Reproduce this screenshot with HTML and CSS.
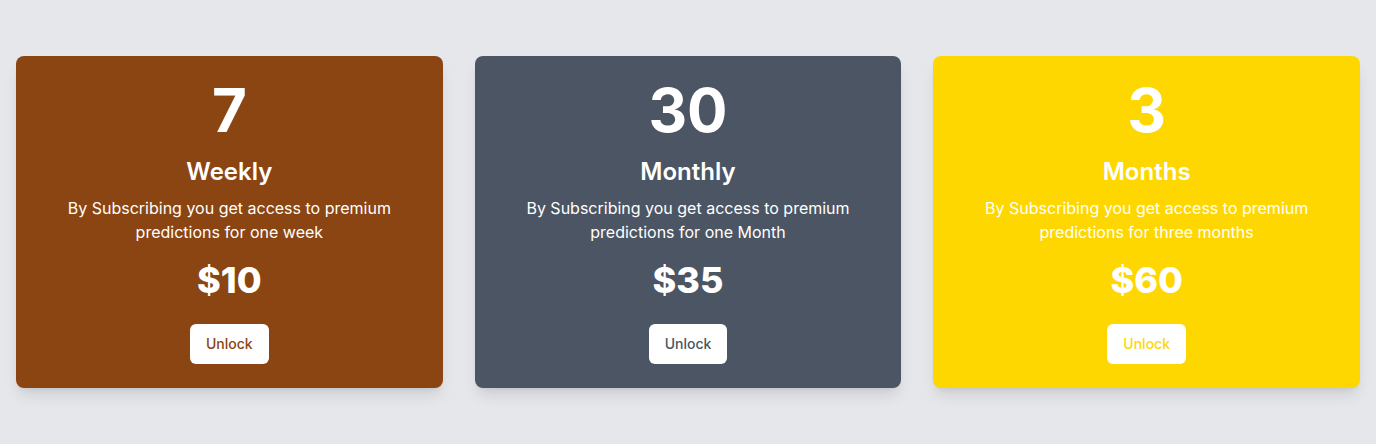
FILE: index.html
```html
<!DOCTYPE html>
<html lang="en">
<head>
    <meta charset="UTF-8">
    <meta name="viewport" content="width=device-width, initial-scale=1.0">
    <title>Plans</title>
    <link rel="stylesheet" href="styles.css">
</head>
<body>

<div class="plans">
    <div class="plan weekly">
        <div class="plan-days">7</div>
        <h2 class="plan-name">Weekly</h2>
        <p class="plan-desc">By Subscribing you get access to premium predictions for one week</p>
        <div class="plan-price">$10</div>
        <button class="unlock">Unlock</button>
    </div>

    <div class="plan monthly">
        <div class="plan-days">30</div>
        <h2 class="plan-name">Monthly</h2>
        <p class="plan-desc">By Subscribing you get access to premium predictions for one Month</p>
        <div class="plan-price">$35</div>
        <button class="unlock">Unlock</button>
    </div>

    <div class="plan quarterly">
        <div class="plan-days">3</div>
        <h2 class="plan-name">Months</h2>
        <p class="plan-desc">By Subscribing you get access to premium predictions for three months</p>
        <div class="plan-price">$60</div>
        <button class="unlock">Unlock</button>
    </div>
</div>

</body>
</html>
```

FILE: styles.css
```css
body {
    margin: 0;
    background-color: #e5e7eb;
    font-family: Inter, "Noto Sans", sans-serif;
    color: #fff;
}

.plans {
    display: grid;
    grid-template-columns: repeat(3, 1fr);
    gap: 32px;
    padding: 56px 16px;
}

.plan {
    display: flex;
    flex-direction: column;
    align-items: center;
    text-align: center;
    padding: 24px;
    border-radius: 8px;
    box-shadow: 0 10px 15px -3px rgba(0, 0, 0, 0.1), 0 4px 6px -4px rgba(0, 0, 0, 0.1);
}

.weekly { background-color: #8b4513; }
.monthly { background-color: #4b5563; }
.quarterly { background-color: #ffd700; }

.plan-days {
    font-size: 60px;
    line-height: 60px;
    font-weight: 700;
}

.plan-name {
    margin: 16px 0 0;
    font-size: 24px;
    line-height: 32px;
    font-weight: 600;
}

.plan-desc {
    margin: 8px 0 0;
    font-size: 16px;
    line-height: 24px;
}

.plan-price {
    margin-top: 16px;
    font-size: 36px;
    line-height: 40px;
    font-weight: 800;
}

.unlock {
    margin-top: 24px;
    padding: 10px 16px;
    background-color: #fff;
    border: none;
    border-radius: 6px;
    font-family: inherit;
    font-size: 14px;
    line-height: 20px;
    font-weight: 500;
    cursor: pointer;
}

.weekly .unlock { color: #8b4513; }
.monthly .unlock { color: #4b5563; }
.quarterly .unlock { color: #ffd700; }
```
